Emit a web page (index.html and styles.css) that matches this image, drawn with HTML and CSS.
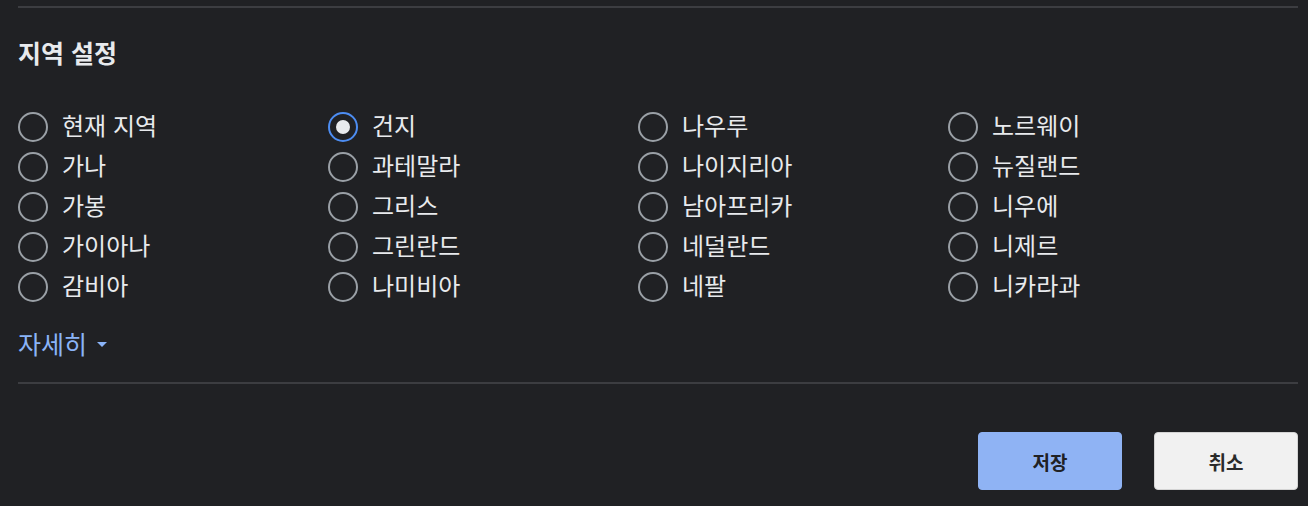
FILE: index.html
```html
<!DOCTYPE html>
<html lang="ko">
<head>
<meta charset="utf-8">
<title>지역 설정</title>
<link rel="stylesheet" href="styles.css">
</head>
<body>
<div class="page">
  <div class="rule rule-top"></div>
  <h2 class="title">지역 설정</h2>
  <div class="grid">
    <label class="opt"><span class="radio"></span><span class="lbl">현재 지역</span></label>
    <label class="opt"><span class="radio checked"></span><span class="lbl">건지</span></label>
    <label class="opt"><span class="radio"></span><span class="lbl">나우루</span></label>
    <label class="opt"><span class="radio"></span><span class="lbl">노르웨이</span></label>

    <label class="opt"><span class="radio"></span><span class="lbl">가나</span></label>
    <label class="opt"><span class="radio"></span><span class="lbl">과테말라</span></label>
    <label class="opt"><span class="radio"></span><span class="lbl">나이지리아</span></label>
    <label class="opt"><span class="radio"></span><span class="lbl">뉴질랜드</span></label>

    <label class="opt"><span class="radio"></span><span class="lbl">가봉</span></label>
    <label class="opt"><span class="radio"></span><span class="lbl">그리스</span></label>
    <label class="opt"><span class="radio"></span><span class="lbl">남아프리카</span></label>
    <label class="opt"><span class="radio"></span><span class="lbl">니우에</span></label>

    <label class="opt"><span class="radio"></span><span class="lbl">가이아나</span></label>
    <label class="opt"><span class="radio"></span><span class="lbl">그린란드</span></label>
    <label class="opt"><span class="radio"></span><span class="lbl">네덜란드</span></label>
    <label class="opt"><span class="radio"></span><span class="lbl">니제르</span></label>

    <label class="opt"><span class="radio"></span><span class="lbl">감비아</span></label>
    <label class="opt"><span class="radio"></span><span class="lbl">나미비아</span></label>
    <label class="opt"><span class="radio"></span><span class="lbl">네팔</span></label>
    <label class="opt"><span class="radio"></span><span class="lbl">니카라과</span></label>
  </div>
  <div class="more">자세히<span class="caret"></span></div>
  <div class="rule rule-bottom"></div>
  <div class="actions">
    <button class="btn btn-primary">저장</button>
    <button class="btn btn-secondary">취소</button>
  </div>
</div>
</body>
</html>
```

FILE: styles.css
```css
html, body {
  margin: 0;
  padding: 0;
  background: #202124;
}

body {
  font-family: "Noto Sans CJK KR", "Noto Sans", sans-serif;
  color: #e8eaed;
}

.page {
  padding: 6px 10px 0 18px;
}

.rule {
  height: 2px;
  background: #3c3d41;
}

.title {
  margin: 28px 0 0 0;
  font-size: 25px;
  line-height: 32px;
  font-weight: 700;
  color: #e8eaed;
}

.grid {
  margin-top: 37px;
  display: grid;
  grid-template-columns: repeat(4, 310px);
  grid-auto-rows: 40px;
}

.opt {
  display: flex;
  align-items: center;
  font-size: 24px;
  line-height: 40px;
  color: #e8eaed;
}

.radio {
  box-sizing: border-box;
  width: 30px;
  height: 30px;
  border: 2px solid #9aa0a6;
  border-radius: 50%;
  margin-right: 14px;
  margin-top: 4px;
  flex: none;
  display: flex;
  align-items: center;
  justify-content: center;
}

.radio.checked {
  border-color: #4d8df2;
}

.radio.checked::after {
  content: "";
  width: 14px;
  height: 14px;
  border-radius: 50%;
  background: #e8eaed;
}

.more {
  margin-top: 23px;
  font-size: 25px;
  line-height: 30px;
  color: #8ab4f8;
  display: flex;
  align-items: center;
}

.caret {
  width: 0;
  height: 0;
  margin-left: 10px;
  margin-top: 3px;
  border-left: 5.5px solid transparent;
  border-right: 5.5px solid transparent;
  border-top: 5px solid #8ab4f8;
}

.rule-bottom {
  margin-top: 24px;
}

.actions {
  margin-top: 48px;
  display: flex;
  justify-content: flex-end;
  gap: 32px;
}

.btn {
  box-sizing: border-box;
  width: 144px;
  height: 58px;
  border-radius: 4px;
  font-family: "Noto Sans CJK KR", "Noto Sans", sans-serif;
  font-size: 19px;
  font-weight: 700;
  color: #202124;
  cursor: pointer;
}

.btn-primary {
  background: #8fb3f4;
  border: 1px solid #8fb3f4;
}

.btn-secondary {
  background: #f1f1f1;
  border: 1px solid #d4d4d4;
  color: #2a2a2a;
}
```
